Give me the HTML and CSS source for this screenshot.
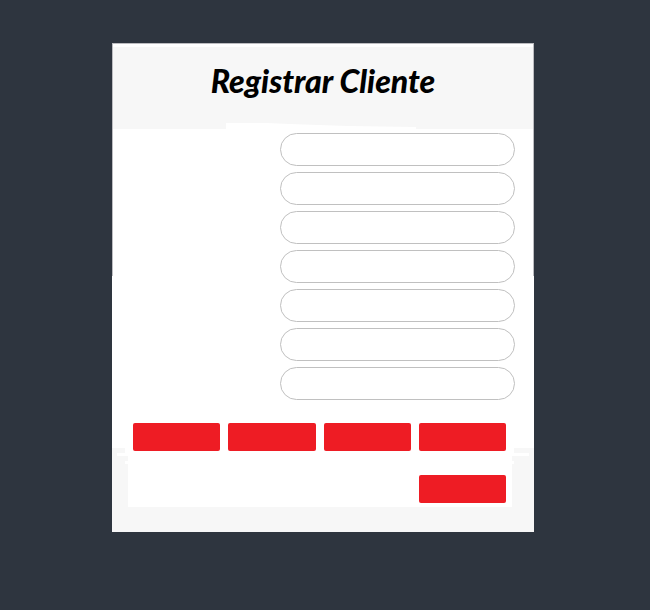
FILE: index.html
```html
<!DOCTYPE html>
<html lang="es">
<head>
<meta charset="utf-8">
<meta name="viewport" content="width=device-width, initial-scale=1">
<title>Registrar Cliente</title>
<link rel="stylesheet" href="styles.css">
</head>
<body>
<form class="card">
  <header class="card-header">
    <h1>Registrar Cliente</h1>
    <svg class="header-edge" viewBox="0 0 191 6" preserveAspectRatio="none" aria-hidden="true"><path d="M0 0H41L64 1L93 2L123 3L191 4V6H0Z" fill="#fff"/></svg>
  </header>
  <div class="fields">
    <input type="text" aria-label="Campo 1">
    <input type="text" aria-label="Campo 2">
    <input type="text" aria-label="Campo 3">
    <input type="text" aria-label="Campo 4">
    <input type="text" aria-label="Campo 5">
    <input type="text" aria-label="Campo 6">
    <input type="text" aria-label="Campo 7">
  </div>
  <footer class="card-footer">
    <div class="actions">
      <button type="button" aria-label="Acción 1"></button>
      <button type="button" aria-label="Acción 2"></button>
      <button type="button" aria-label="Acción 3"></button>
      <button type="button" aria-label="Acción 4"></button>
      <button type="button" class="last" aria-label="Acción 5"></button>
    </div>
  </footer>
</form>
</body>
</html>
```

FILE: styles.css
```css
* {
  box-sizing: border-box;
}

body {
  margin: 0;
  min-height: 100vh;
  padding: 43px 116px 78px 112px;
  background: #2e353f;
  font-family: Lato, "Liberation Sans", sans-serif;
}

.card {
  position: relative;
  background: #fff;
  padding-top: 4px;
}

/* Hairline around the upper part of the card */
.card::before {
  content: "";
  position: absolute;
  z-index: 1;
  inset: 0 0 auto;
  height: 232px;
  border: 1px solid #bcbcc0;
  border-bottom: 0;
  pointer-events: none;
}

.card-header {
  position: relative;
  height: 82px;
  padding-top: 16px;
  background: #f7f7f7;
  text-align: center;
}

.card-header h1 {
  margin: 0;
  color: #000;
  font-family: "Harlow Solid Italic", Lato, sans-serif;
  font-size: 32px;
  font-style: italic;
  font-weight: 900;
  line-height: 36px;
}

.header-edge {
  position: absolute;
  left: 27%;
  bottom: 0;
  width: 45%;
  height: 6px;
}

.fields {
  display: grid;
  gap: 6px;
  padding: 4px 19px 23px 168px;
}

.fields input {
  width: 100%;
  height: 33px;
  padding: 0 16px;
  border: 1px solid #c0c0c0;
  border-radius: 17px;
  background: #fff;
  font: inherit;
}

.card-footer {
  padding: 0 22px 25px 16px;
  background: linear-gradient(#fff 25px, #f7f7f7 25px);
}

.actions {
  position: relative;
  z-index: 0;
  display: grid;
  grid-template-columns: repeat(4, 1fr);
  gap: 24px 8px;
  padding: 0 6px 4px 5px;
  background: #fff;
}

/* Stepped upper corners of the white panel */
.actions::before,
.actions::after {
  content: "";
  position: absolute;
  z-index: -1;
  background: #fff;
}

.actions::before {
  inset: 0 -2px auto -3px;
  height: 41px;
  background: linear-gradient(#fff 33px, transparent 33px, transparent 38px, #fff 38px);
}

.actions::after {
  inset: 30px -17px auto -11px;
  height: 3px;
}

.actions button {
  height: 28px;
  padding: 0;
  border: 0;
  border-radius: 2px;
  background: #ee1c24;
}

.actions .last {
  grid-column: 4;
}
```
